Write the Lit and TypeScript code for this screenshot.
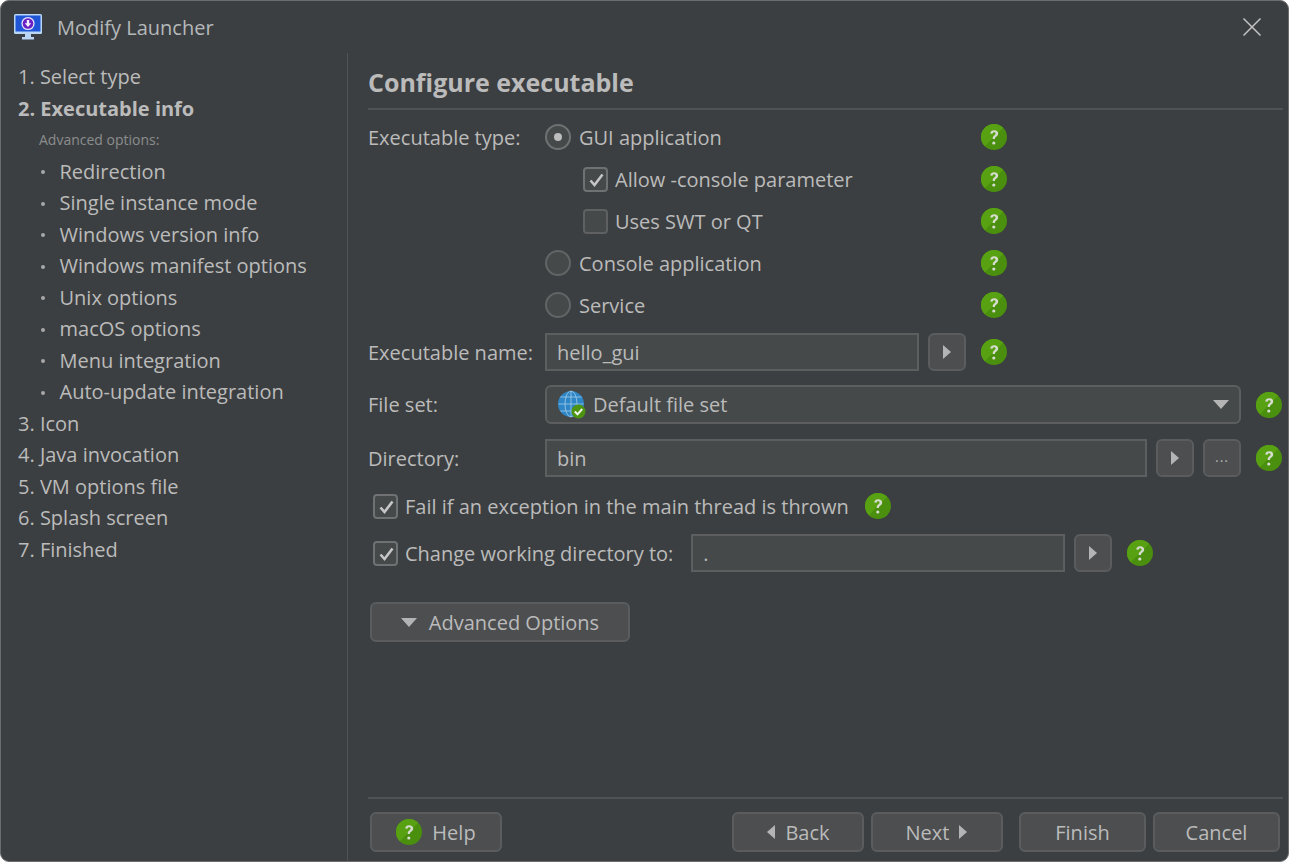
import { LitElement, html, css, svg } from "lit";
import { customElement } from "lit/decorators.js";

const helpIcon = html`<svg class="help" width="26" height="26" viewBox="0 0 26 26">
  <circle cx="13" cy="13" r="13" fill="#4a8f0e"/>
  <path d="M3.8 22.2A13 13 0 0 1 22.2 3.8Z" fill="#57a112"/>
  <path d="M9.2 9.6c.2-2.2 1.8-3.4 4-3.4 2.4 0 4 1.3 4 3.3 0 1.6-.9 2.4-2 3.2-.9.6-1.2 1-1.2 2v.4h-2.3v-.7c0-1.5.5-2.2 1.6-3 .9-.6 1.3-1.1 1.3-1.8 0-.8-.6-1.4-1.5-1.4-1 0-1.5.6-1.6 1.6Z" fill="#d6dccf"/>
  <circle cx="12.8" cy="19" r="1.6" fill="#d6dccf"/>
</svg>`;

const triRight = html`<svg width="9" height="14" viewBox="0 0 9 14"><path d="M0 0L8 7L0 14Z" fill="#b4b4b4"/></svg>`;
const triLeft = html`<svg width="9" height="14" viewBox="0 0 9 14"><path d="M9 0L1 7L9 14Z" fill="#b4b4b4"/></svg>`;
const triDown = html`<svg width="16" height="9" viewBox="0 0 16 9"><path d="M0 0H16L8 9Z" fill="#b4b4b4"/></svg>`;

const checkMark = svg`<path d="M5.5 12.5L9.5 17L17.5 6.5" fill="none" stroke="#c6c6c6" stroke-width="2.6"/>`;

const globe = html`<svg class="globe" width="30" height="30" viewBox="0 0 30 30">
  <circle cx="14" cy="14" r="13" fill="#2f86c6"/>
  <g fill="none" stroke="#a9d3ee" stroke-width="0.9" opacity="0.85">
    <ellipse cx="14" cy="14" rx="6" ry="13"/>
    <path d="M14 1V27M1.5 14H26.5M3.4 7H24.6M3.4 21H24.6"/>
  </g>
  <circle cx="21.5" cy="21.5" r="7" fill="#4c9412"/>
  <path d="M17.8 21.5L20.5 24.3L25.2 19" fill="none" stroke="#f1f5ec" stroke-width="2"/>
</svg>`;

const monitor = html`<svg width="28" height="26" viewBox="0 0 28 26">
  <rect x="0" y="0" width="28" height="20" rx="1.5" fill="#b9d6f5"/>
  <rect x="1.5" y="1.5" width="25" height="16" fill="#1f56d8"/>
  <rect x="11" y="20" width="6" height="3" fill="#b9d6f5"/>
  <rect x="8" y="23" width="12" height="2.5" fill="#b9d6f5"/>
  <circle cx="14" cy="9.5" r="6.6" fill="#e6e0f6"/>
  <circle cx="14" cy="9.5" r="5.3" fill="#6a1fc4"/>
  <path d="M12.8 6H15.2V9.2H17.2L14 13L10.8 9.2H12.8Z" fill="#f4f0fb"/>
</svg>`;

const closeIcon = html`<svg width="20" height="20" viewBox="0 0 20 20"><path d="M1.5 1.5L18.5 18.5M18.5 1.5L1.5 18.5" stroke="#c4c4c4" stroke-width="1.5" fill="none"/></svg>`;

@customElement("app-root")
export class AppRoot extends LitElement {
  static styles = css`
    :host { display: block; width: 1289px; height: 862px; background: #fff; overflow: hidden;
      font-family: "Open Sans", "Noto Sans", sans-serif; font-size: 20px; color: #bbbbbb; }
    * { box-sizing: border-box; }
    .win { width: 1289px; height: 862px; background: #3c3f41; border: 1px solid #6a6c6e; border-radius: 9px;
      display: flex; flex-direction: column; overflow: hidden; }
    .titlebar { height: 52px; flex: none; display: flex; align-items: center; padding: 0 26px 0 13px; }
    .titlebar .name { margin-left: 15px; flex: 1; color: #b4b8ba; letter-spacing: 0; }
    .titlebar svg { display: block; }
    .body { flex: 1; display: flex; min-height: 0; }
    .side { width: 347px; flex: none; border-right: 1px solid #505254; padding: 8px 0 0 17px; }
    .step { height: 31.5px; line-height: 31.5px; white-space: nowrap; }
    .step.on { font-weight: 700; }
    .step.adv { font-size: 14px; color: #8b8d8e; padding-left: 21px; }
    .step.sub { display: flex; align-items: center; padding-left: 23px; }
    .dot { width: 4px; height: 4px; border-radius: 50%; background: #a8a8a8; margin-right: 14.5px; flex: none; margin-top: 2px; }
    .main { flex: 1; min-width: 0; display: flex; flex-direction: column; padding: 0 5px 0 20px; }
    h1 { margin: 0; height: 57px; flex: none; border-bottom: 2px solid #505254; font-size: 25px; font-weight: 700;
      line-height: 58px; color: #bbbbbb; }
    .form { flex: 1; display: flex; flex-direction: column; padding-top: 6px; }
    .row { display: flex; align-items: center; height: 42px; flex: none; }
    .lab { width: 177px; flex: none; }
    .ctl { display: flex; align-items: center; }
    .radio { width: 26px; height: 26px; border-radius: 50%; border: 2px solid #6f7173; background: #45494a;
      display: flex; align-items: center; justify-content: center; margin-right: 8px; flex: none; }
    .radio i { width: 8px; height: 8px; border-radius: 50%; background: #bdbdbd; display: block; }
    .radio.off { border-color: #626466; background: #45494a; }
    .cb { width: 25px; height: 25px; border: 2px solid #6f7173; border-radius: 4px; background: #45494a; flex: none; margin-right: 7px; display: block; }
    .cb svg { display: block; margin: -0.5px; }
    .cb.off { border-color: #5e6062; }
    .indent1 { padding-left: 38px; }
    .help { display: block; flex: none; }
    .wf { width: 436px; display: flex; align-items: center; }
    .wf.s { width: 400px; }
    .input { height: 38px; background: #45494a; border: 2px solid #5c5e60; padding: 0 10px; display: flex; align-items: center; flex: none; }
    .btn { background: #4c4e50; border: 2px solid #5a5c5e; border-radius: 6px; display: flex; align-items: center; justify-content: center; flex: none; color: #bbbbbb; }
    .sq { width: 38px; height: 38px; }
    .dots { color: #b0b0b0; font-size: 14px; letter-spacing: 1px; padding-bottom: 4px; }
    .combo { width: 696px; height: 39px; background: #45494a; border: 2px solid #5c5e60; border-radius: 6px; display: flex; align-items: center; padding: 0 10px; flex: none; }
    .combo .txt { flex: 1; margin-left: 6px; }
    .globe { display: block; margin-top: 1px; flex: none; }
    .r-name { height: 38px; margin-top: 7px; }
    .r-set { height: 39px; margin-top: 14px; }
    .r-dir { height: 38px; margin-top: 15px; }
    .r-fail { height: 38px; margin-top: 10px; padding-left: 5px; }
    .r-chg { height: 38px; margin-top: 9px; padding-left: 5px; }
    .adv-row { margin-top: 30px; padding-left: 2px; flex: none; }
    .advbtn { width: 260px; height: 40px; gap: 12px; }
    .foot { flex: none; height: 64px; border-top: 2px solid #505254; display: flex; align-items: flex-start; padding: 13px 3px 0 2px; }
    .fb { height: 40px; width: 132px; gap: 10px; }
    .fb.w { width: 127px; }
    .spacer { flex: 1; }
  `;

  private cb(on: boolean) {
    return html`<span class="cb ${on ? "" : "off"}">${on
      ? html`<svg width="23" height="23" viewBox="0 0 23 23">${checkMark}</svg>` : ""}</span>`;
  }

  render() {
    const subs = ["Redirection", "Single instance mode", "Windows version info", "Windows manifest options",
      "Unix options", "macOS options", "Menu integration", "Auto-update integration"];
    const after = ["3. Icon", "4. Java invocation", "5. VM options file", "6. Splash screen", "7. Finished"];
    return html`<div class="win">
      <div class="titlebar">${monitor}<span class="name">Modify Launcher</span>${closeIcon}</div>
      <div class="body">
        <nav class="side">
          <div class="step">1. Select type</div>
          <div class="step on">2. Executable info</div>
          <div class="step adv">Advanced options:</div>
          ${subs.map((s) => html`<div class="step sub"><span class="dot"></span>${s}</div>`)}
          ${after.map((s) => html`<div class="step">${s}</div>`)}
        </nav>
        <section class="main">
          <h1>Configure executable</h1>
          <div class="form">
            <div class="row">
              <span class="lab">Executable type:</span>
              <div class="wf"><span class="radio"><i></i></span>GUI application</div>${helpIcon}
            </div>
            <div class="row">
              <span class="lab"></span>
              <div class="wf indent1">${this.cb(true)}Allow -console parameter</div>${helpIcon}
            </div>
            <div class="row">
              <span class="lab"></span>
              <div class="wf indent1">${this.cb(false)}Uses SWT or QT</div>${helpIcon}
            </div>
            <div class="row">
              <span class="lab"></span>
              <div class="wf"><span class="radio off"></span>Console application</div>${helpIcon}
            </div>
            <div class="row">
              <span class="lab"></span>
              <div class="wf"><span class="radio off"></span>Service</div>${helpIcon}
            </div>
            <div class="row r-name">
              <span class="lab">Executable name:</span>
              <div class="wf">
                <div class="input" style="width:374px">hello_gui</div>
                <div class="btn sq" style="margin-left:9px">${triRight}</div>
              </div>${helpIcon}
            </div>
            <div class="row r-set">
              <span class="lab">File set:</span>
              <div class="combo">${globe}<span class="txt">Default file set</span>${triDown}</div>
              <span style="width:15px"></span>${helpIcon}
            </div>
            <div class="row r-dir">
              <span class="lab">Directory:</span>
              <div class="input" style="width:602px">bin</div>
              <div class="btn sq" style="margin-left:9px">${triRight}</div>
              <div class="btn sq" style="margin-left:9px"><span class="dots">...</span></div>
              <span style="width:15px"></span>${helpIcon}
            </div>
            <div class="row r-fail">
              ${this.cb(true)}Fail if an exception in the main thread is thrown
              <span style="width:16px"></span>${helpIcon}
            </div>
            <div class="row r-chg">
              ${this.cb(true)}Change working directory to:
              <div class="input" style="width:374px;margin-left:18px">.</div>
              <div class="btn sq" style="margin-left:9px">${triRight}</div>
              <span style="width:15px"></span>${helpIcon}
            </div>
            <div class="adv-row">
              <div class="btn advbtn">${triDown}<span>Advanced Options</span></div>
            </div>
          </div>
          <div class="foot">
            <div class="btn fb">${helpIcon}Help</div>
            <div class="spacer"></div>
            <div class="btn fb">${triLeft}Back</div>
            <div class="btn fb" style="margin-left:7px">Next${triRight}</div>
            <div class="btn fb w" style="margin-left:16px">Finish</div>
            <div class="btn fb w" style="margin-left:7px">Cancel</div>
          </div>
        </section>
      </div>
    </div>`;
  }
}
